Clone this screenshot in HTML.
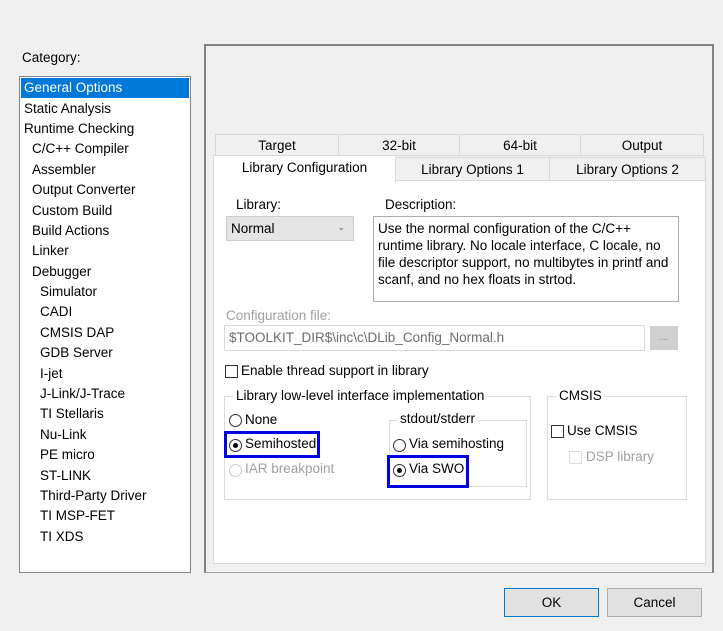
<!DOCTYPE html>
<html><head><meta charset="utf-8"><style>
*{box-sizing:border-box;margin:0;padding:0}
body{width:723px;height:631px;background:#f0f0f0;font-family:"Liberation Sans",sans-serif;font-size:13.5px;color:#000;position:relative;overflow:hidden}
.a{position:absolute;white-space:nowrap}
.list{position:absolute;left:19px;top:76px;width:172px;height:497px;background:#fff;border:1px solid #828790}
.it{position:absolute;left:4px;height:20px;line-height:20px}
.sel{left:1px;width:168px;background:#0078d7;color:#fff;padding-left:3px}
.panel{position:absolute;left:204px;top:44px;width:510px;height:529px;border:1px solid #a0a0a0;border-left:2px solid #828282;border-top:2px solid #828282;border-right:2px solid #828282}
.tab{position:absolute;height:22px;line-height:22px;text-align:center;border:1px solid #d9d9d9;background:#f0f0f0}
.content{position:absolute;left:213px;top:180px;width:493px;height:384px;background:#fff;border:1px solid #d9d9d9}
.gb{position:absolute;border:1px solid #dcdcdc}
.lbl{position:absolute;background:#fff;padding:0 3px;white-space:nowrap}
.rad{position:absolute;width:13px;height:13px;border:1px solid #333;border-radius:50%;background:#fff}
.rad.on::after{content:"";position:absolute;left:3px;top:3px;width:5px;height:5px;border-radius:50%;background:#000}
.chk{position:absolute;width:13px;height:13px;border:1px solid #333;background:#fff}
.btn{position:absolute;height:29px;line-height:27px;text-align:center;background:#e1e1e1;border:1px solid #adadad}
</style></head><body>
<div class="a" style="left:22px;top:50px">Category:</div>
<div class="list">
<div class="it sel" style="top:1px">General Options</div>
<div class="it" style="top:22px">Static Analysis</div>
<div class="it" style="top:42px">Runtime Checking</div>
<div class="it" style="top:62px;left:12px">C/C++ Compiler</div>
<div class="it" style="top:83px;left:12px">Assembler</div>
<div class="it" style="top:103px;left:12px">Output Converter</div>
<div class="it" style="top:124px;left:12px">Custom Build</div>
<div class="it" style="top:144px;left:12px">Build Actions</div>
<div class="it" style="top:164px;left:12px">Linker</div>
<div class="it" style="top:185px;left:12px">Debugger</div>
<div class="it" style="top:205px;left:20px">Simulator</div>
<div class="it" style="top:225px;left:20px">CADI</div>
<div class="it" style="top:246px;left:20px">CMSIS DAP</div>
<div class="it" style="top:266px;left:20px">GDB Server</div>
<div class="it" style="top:287px;left:20px">I-jet</div>
<div class="it" style="top:307px;left:20px">J-Link/J-Trace</div>
<div class="it" style="top:327px;left:20px">TI Stellaris</div>
<div class="it" style="top:348px;left:20px">Nu-Link</div>
<div class="it" style="top:368px;left:20px">PE micro</div>
<div class="it" style="top:389px;left:20px">ST-LINK</div>
<div class="it" style="top:409px;left:20px">Third-Party Driver</div>
<div class="it" style="top:429px;left:20px">TI MSP-FET</div>
<div class="it" style="top:450px;left:20px">TI XDS</div>
</div>
<div class="panel"></div>
<div class="tab" style="left:215px;top:134px;width:124px">Target</div>
<div class="tab" style="left:338px;top:134px;width:122px">32-bit</div>
<div class="tab" style="left:459px;top:134px;width:122px">64-bit</div>
<div class="tab" style="left:580px;top:134px;width:124px">Output</div>
<div class="tab" style="left:395px;top:157px;width:155px;height:24px;line-height:24px">Library Options 1</div>
<div class="tab" style="left:549px;top:157px;width:157px;height:24px;line-height:24px">Library Options 2</div>
<div class="content"></div>
<div class="tab" style="left:213px;top:155px;width:183px;height:27px;line-height:24px;background:#fff;border-bottom:none;z-index:2">Library Configuration</div>
<div class="a" style="left:236px;top:197px">Library:</div>
<div class="a" style="left:226px;top:216px;width:128px;height:25px;background:#e5e5e5;border:1px solid #cfcfcf;line-height:23px;padding-left:4px">Normal<span style="position:absolute;right:8px;top:-1px;font-size:9px;color:#666">&#8964;</span></div>
<div class="a" style="left:385px;top:197px">Description:</div>
<div class="a" style="left:373px;top:216px;width:306px;height:86px;border:1px solid #adadad;padding:3px 4px;white-space:normal;line-height:17px">Use the normal configuration of the C/C++ runtime library. No locale interface, C locale, no file descriptor support, no multibytes in printf and scanf, and no hex floats in strtod.</div>
<div class="a" style="left:226px;top:308px;color:#a0a0a0">Configuration file:</div>
<div class="a" style="left:224px;top:325px;width:421px;height:26px;border:1px solid #d9d9d9;line-height:24px;padding-left:4px;color:#6d6d6d">$TOOLKIT_DIR$\inc\c\DLib_Config_Normal.h</div>
<div class="a" style="left:650px;top:326px;width:28px;height:24px;background:#d0d0d0;color:#888;text-align:center;line-height:22px;font-size:11px">...</div>
<div class="chk" style="left:225px;top:365px"></div>
<div class="a" style="left:241px;top:363px">Enable thread support in library</div>
<div class="gb" style="left:224px;top:396px;width:307px;height:104px"></div>
<div class="lbl" style="left:233px;top:388px">Library low-level interface implementation</div>
<div class="rad" style="left:229px;top:414px"></div><div class="a" style="left:245px;top:412px">None</div>
<div class="rad on" style="left:229px;top:439px"></div><div class="a" style="left:245px;top:436px">Semihosted</div>
<div class="a" style="left:224px;top:431px;width:96px;height:27px;border:3px solid #0000e0"></div>
<div class="rad" style="left:229px;top:464px;border-color:#ccc"></div><div class="a" style="left:245px;top:461px;color:#a0a0a0">IAR breakpoint</div>
<div class="gb" style="left:389px;top:420px;width:138px;height:67px"></div>
<div class="lbl" style="left:397px;top:411px">stdout/stderr</div>
<div class="rad" style="left:393px;top:439px"></div><div class="a" style="left:409px;top:436px">Via semihosting</div>
<div class="rad on" style="left:393px;top:464px"></div><div class="a" style="left:409px;top:461px">Via SWO</div>
<div class="a" style="left:387px;top:455px;width:82px;height:33px;border:3px solid #0000e0"></div>
<div class="gb" style="left:547px;top:396px;width:140px;height:104px"></div>
<div class="lbl" style="left:556px;top:388px">CMSIS</div>
<div class="chk" style="left:551px;top:425px"></div><div class="a" style="left:567px;top:423px">Use CMSIS</div>
<div class="chk" style="left:569px;top:451px;border-color:#ddd"></div><div class="a" style="left:586px;top:449px;color:#a0a0a0">DSP library</div>
<div class="btn" style="left:504px;top:588px;width:95px;border:1px solid #0078d7">OK</div>
<div class="btn" style="left:607px;top:588px;width:95px">Cancel</div>
</body></html>
